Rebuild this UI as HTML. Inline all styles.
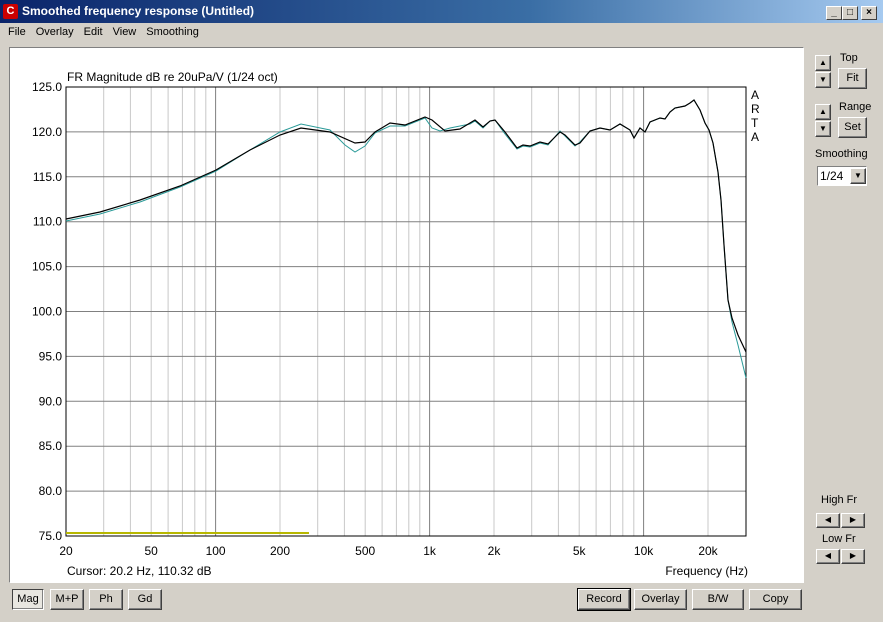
<!DOCTYPE html>
<html><head><meta charset="utf-8"><style>
*{margin:0;padding:0;box-sizing:border-box}
body{width:883px;height:622px;background:#d4d0c8;font-family:"Liberation Sans",sans-serif;font-size:11px;position:relative;overflow:hidden;color:#000}
.title{position:absolute;left:0;top:0;width:883px;height:23px;background:linear-gradient(to right,#0a246a,#3a6ea5 60%,#a6caf0);color:#fff;font-weight:bold;font-size:12px;line-height:22px;padding-left:22px}
.ico{position:absolute;left:3px;top:4px;width:15px;height:15px;background:#c00;border-radius:2px;color:#fff;font-size:11px;line-height:15px;text-align:center}
.tb{position:absolute;top:6px;width:16px;height:14px;background:#d4d0c8;border:1px solid;border-color:#fff #404040 #404040 #fff;font-size:10px;line-height:12px;text-align:center;color:#000;font-weight:bold}
.menu{position:absolute;top:26px;left:8px;font-size:11px}
.menu span{margin-right:10px}
.panel{position:absolute;left:9px;top:47px;width:795px;height:536px;background:#fff;border:1px solid;border-color:#808080 #fff #fff #808080}
.btn{position:absolute;background:#d4d0c8;border:1px solid;border-color:#fff #404040 #404040 #fff;box-shadow:inset -1px -1px #808080;text-align:center;font-size:11px}
.lbl{position:absolute;font-size:11px}
</style></head><body>
<div class="title"><div class="ico">C</div>Smoothed frequency response (Untitled)</div>
<div class="tb" style="left:826px">_</div><div class="tb" style="left:842px">□</div><div class="tb" style="left:861px">×</div>
<div class="menu"><span>File</span><span>Overlay</span><span>Edit</span><span>View</span><span>Smoothing</span></div>
<div class="panel"></div>
<svg id="g" width="883" height="622" style="position:absolute;left:0;top:0" font-family="Liberation Sans" font-size="12"></svg>
<div class="btn" style="left:815px;top:55px;width:16px;height:16px;font-size:8px;line-height:13px">▲</div>
<div class="btn" style="left:815px;top:72px;width:16px;height:16px;font-size:8px;line-height:13px">▼</div>
<div class="lbl" style="left:840px;top:52px">Top</div>
<div class="btn" style="left:838px;top:68px;width:29px;height:21px;line-height:19px">Fit</div>
<div class="btn" style="left:815px;top:104px;width:16px;height:16px;font-size:8px;line-height:13px">▲</div>
<div class="btn" style="left:815px;top:121px;width:16px;height:16px;font-size:8px;line-height:13px">▼</div>
<div class="lbl" style="left:839px;top:101px">Range</div>
<div class="btn" style="left:838px;top:117px;width:29px;height:21px;line-height:19px">Set</div>
<div class="lbl" style="left:815px;top:148px">Smoothing</div>
<div style="position:absolute;left:817px;top:166px;width:50px;height:20px;background:#fff;border:1px solid;border-color:#808080 #fff #fff #808080;font-size:12px;line-height:18px;padding-left:2px">1/24<div class="btn" style="left:32px;top:1px;width:16px;height:16px;font-size:8px;line-height:13px">▼</div></div>
<div class="lbl" style="left:821px;top:494px">High Fr</div>
<div class="btn" style="left:816px;top:513px;width:24px;height:15px;font-size:8px;line-height:12px">◀</div>
<div class="btn" style="left:841px;top:513px;width:24px;height:15px;font-size:8px;line-height:12px">▶</div>
<div class="lbl" style="left:822px;top:533px">Low Fr</div>
<div class="btn" style="left:816px;top:549px;width:24px;height:15px;font-size:8px;line-height:12px">◀</div>
<div class="btn" style="left:841px;top:549px;width:24px;height:15px;font-size:8px;line-height:12px">▶</div>
<div class="btn" style="left:12px;top:589px;width:32px;height:21px;line-height:19px;border-color:#404040 #fff #fff #404040;background:#e8e6e0">Mag</div>
<div class="btn" style="left:50px;top:589px;width:34px;height:21px;line-height:19px">M+P</div>
<div class="btn" style="left:89px;top:589px;width:34px;height:21px;line-height:19px">Ph</div>
<div class="btn" style="left:128px;top:589px;width:34px;height:21px;line-height:19px">Gd</div>
<div class="btn" style="left:578px;top:589px;width:52px;height:21px;line-height:19px;outline:1px solid #000">Record</div>
<div class="btn" style="left:634px;top:589px;width:53px;height:21px;line-height:19px">Overlay</div>
<div class="btn" style="left:692px;top:589px;width:52px;height:21px;line-height:19px">B/W</div>
<div class="btn" style="left:749px;top:589px;width:53px;height:21px;line-height:19px">Copy</div>
<script>
var s='',X0=66,X1=746,Y0=87,Y1=536,D=214;
function fx(f){return X0+(Math.log10(f)-Math.log10(20))*D}
var fs=[];for(var d=10;d<=10000;d*=10)for(var m=1;m<10;m++){var f=d*m;if(f>20&&f<30000)fs.push(f)}
fs.forEach(function(f){var x=fx(f).toFixed(1);var maj=(f==100||f==1000||f==10000);s+='<line x1="'+x+'" y1="'+Y0+'" x2="'+x+'" y2="'+Y1+'" stroke="'+(maj?'#808080':'#c8c8c8')+'"/>';});
for(var i=1;i<10;i++){var y=Y0+i*(Y1-Y0)/10;s+='<line x1="'+X0+'" y1="'+y+'" x2="'+X1+'" y2="'+y+'" stroke="#808080"/>'}
for(var i=0;i<=10;i++){var y=Y0+i*(Y1-Y0)/10;s+='<text x="62" y="'+(y+4)+'" text-anchor="end">'+(125-5*i).toFixed(1)+'</text>'}
[[20,'20'],[50,'50'],[100,'100'],[200,'200'],[500,'500'],[1000,'1k'],[2000,'2k'],[5000,'5k'],[10000,'10k'],[20000,'20k']].forEach(function(a){s+='<text x="'+fx(a[0])+'" y="555" text-anchor="middle">'+a[1]+'</text>'});
s+='<rect x="'+X0+'" y="'+Y0+'" width="'+(X1-X0)+'" height="'+(Y1-Y0)+'" fill="none" stroke="#000"/>';
s+='<line x1="66" y1="533" x2="309" y2="533" stroke="#b8b800" stroke-width="2"/>';
s+='<text x="67" y="81">FR Magnitude dB re 20uPa/V (1/24 oct)</text>';
s+='<text x="751" y="99">A</text><text x="751" y="113">R</text><text x="751" y="127">T</text><text x="751" y="141">A</text>';
s+='<text x="67" y="575">Cursor: 20.2 Hz, 110.32 dB</text><text x="748" y="575" text-anchor="end">Frequency (Hz)</text>';
var b="66,219 100,212 140,200 180,186 216,170 250,150 280,135 301,128 330,132 355,143 365,142 375,132 390,123 405,125 425,117 432,120 445,131 460,129 470,123 475,120 483,127 490,121 495,120 505,132 517,148 523,145 530,146 540,142 548,144 560,132 565,135 575,145 580,143 590,131 600,128 610,130 620,124 630,130 634,138 640,128 645,132 650,122 660,118 665,119 670,112 675,108 685,106 690,103 694,100 700,110 705,123 709,130 713,143 718,172 721,200 724,245 728,300 732,318 738,335 746,352";
var t="66,221 100,214 140,202 180,187 216,171 250,150 280,132 301,124 330,130 345,145 355,152 365,146 375,133 390,126 405,126 425,118 432,128 440,131 450,128 460,126 470,124 475,121 483,128 490,121 495,120 505,134 517,149 523,146 530,147 540,143 548,145 560,131 565,136 575,146 580,142 590,131 600,128 610,130 620,124 630,130 634,138 640,128 645,132 650,122 660,118 665,119 670,112 675,108 685,106 690,103 694,100 700,110 705,123 709,130 713,143 718,172 721,200 724,245 728,300 732,322 738,345 746,378";
s+='<polyline points="'+t+'" fill="none" stroke="#2a9a98"/>';
s+='<polyline points="'+b+'" fill="none" stroke="#000" stroke-width="1.2"/>';
document.getElementById('g').innerHTML=s;
</script>
</body></html>
